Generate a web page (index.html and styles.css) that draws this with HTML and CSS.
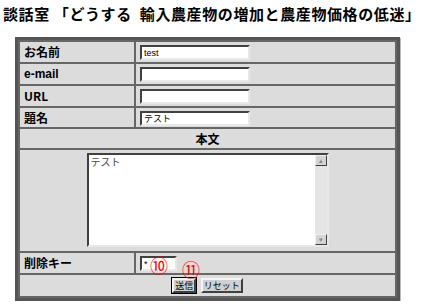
FILE: index.html
```html
<!DOCTYPE html>
<html lang="ja">
<head>
  <meta charset="UTF-8">
  <title>談話室</title>
  <link rel="stylesheet" href="styles.css">
</head>
<body>
  <h1 class="title">談話室 「どうする&nbsp;&nbsp;輸入農産物の増加と農産物価格の低迷」</h1>
  <form class="post">
    <table class="post-table">
      <tr>
        <th class="label">お名前</th>
        <td><input class="field" type="text" value="test"></td>
      </tr>
      <tr>
        <th class="label latin">e-mail</th>
        <td><input class="field" type="text"></td>
      </tr>
      <tr>
        <th class="label">URL</th>
        <td><input class="field" type="text"></td>
      </tr>
      <tr class="short">
        <th class="label">題名</th>
        <td><input class="field" type="text" value="テスト"></td>
      </tr>
      <tr class="short">
        <th class="head" colspan="2">本文</th>
      </tr>
      <tr>
        <td class="body-cell" colspan="2">
          <div class="memo">
            <textarea class="memo-text">テスト</textarea>
            <div class="scroll">
              <span class="scroll-btn">&#9652;</span>
              <span class="scroll-btn">&#9662;</span>
            </div>
          </div>
        </td>
      </tr>
      <tr>
        <th class="label">削除キー</th>
        <td><input class="field key" type="text" value="*"></td>
      </tr>
      <tr>
        <td class="buttons" colspan="2">
          <button class="btn default" type="submit">送信</button>
          <button class="btn" type="reset">リセット</button>
        </td>
      </tr>
    </table>
    <span class="mark mark-10">&#9321;</span>
    <span class="mark mark-11">&#9322;</span>
  </form>
</body>
</html>
```

FILE: styles.css
```css
body {
  margin: 0;
  background: #fff;
  color: #000;
  font-family: "Noto Sans CJK JP", "Liberation Sans", sans-serif;
}
.title {
  margin: 4px 0 0 3px;
  font-size: 15px;
  line-height: 20px;
  font-weight: bold;
  letter-spacing: 0.6px;
  white-space: nowrap;
}
.post {
  position: relative;
  width: 385px;
  margin: 13px 0 0 15px;
}
.post-table {
  width: 385px;
  border: 3px solid #555;
  border-spacing: 2px;
  background: #666;
  box-shadow: 1px 1px 0 #bbb;
}
.post-table th,
.post-table td {
  background: #dcdcdc;
  padding: 0 4px;
  height: 20px;
  font-size: 12px;
  line-height: 14px;
}
.post-table .short th,
.post-table .short td {
  height: 19px;
}
.label {
  width: 106px;
  text-align: left;
  font-weight: bold;
}
.latin {
  font-family: "Liberation Sans", sans-serif;
  font-size: 11px;
}
.head {
  text-align: center;
}
.field {
  box-sizing: border-box;
  width: 110px;
  height: 15px;
  margin: 0;
  padding: 0 2px;
  border: 2px solid;
  border-color: #404040 #e8e8e8 #e8e8e8 #404040;
  background: #fff;
  font-size: 9px;
  font-family: "Liberation Sans", "Noto Sans CJK JP", sans-serif;
  vertical-align: middle;
}
.field.key {
  width: 37px;
}
.post-table td.body-cell {
  height: auto;
  padding: 3px 0 4px;
}
.memo {
  display: flex;
  width: 242px;
  height: 94px;
  margin: 0 auto;
  box-sizing: border-box;
  border: 2px solid;
  border-color: #404040 #e8e8e8 #e8e8e8 #404040;
  background: #fff;
}
.memo-text {
  flex: 1;
  border: none;
  margin: 0;
  padding: 1px 2px;
  resize: none;
  font-size: 10px;
  line-height: 12px;
  color: #444;
  font-family: "Noto Sans CJK JP", sans-serif;
  outline: none;
}
.scroll {
  width: 12px;
  background: #e4e4e4;
  display: flex;
  flex-direction: column;
  justify-content: space-between;
}
.scroll-btn {
  height: 11px;
  box-sizing: border-box;
  border: 1px solid;
  border-color: #f0f0f0 #404040 #404040 #f0f0f0;
  background: #d4d4d4;
  font-size: 7px;
  line-height: 9px;
  text-align: center;
  color: #888;
}
.post-table td.buttons {
  text-align: center;
  padding: 1px 0 2px;
  height: 18px;
}
.btn {
  height: 15px;
  margin: 0 1px;
  padding: 0 1px;
  border: 2px solid;
  border-color: #f4f4f4 #404040 #404040 #f4f4f4;
  background: #d0d0d0;
  font-size: 9px;
  line-height: 10px;
  font-family: "Noto Sans CJK JP", sans-serif;
  vertical-align: middle;
}
.btn.default {
  outline: 1px solid #000;
}
.mark {
  position: absolute;
  color: #f00;
  font-size: 18px;
  line-height: 14px;
  font-family: "Noto Sans CJK JP", sans-serif;
}
.mark-10 {
  left: 135px;
  top: 221px;
}
.mark-11 {
  left: 167px;
  top: 225px;
}
```
